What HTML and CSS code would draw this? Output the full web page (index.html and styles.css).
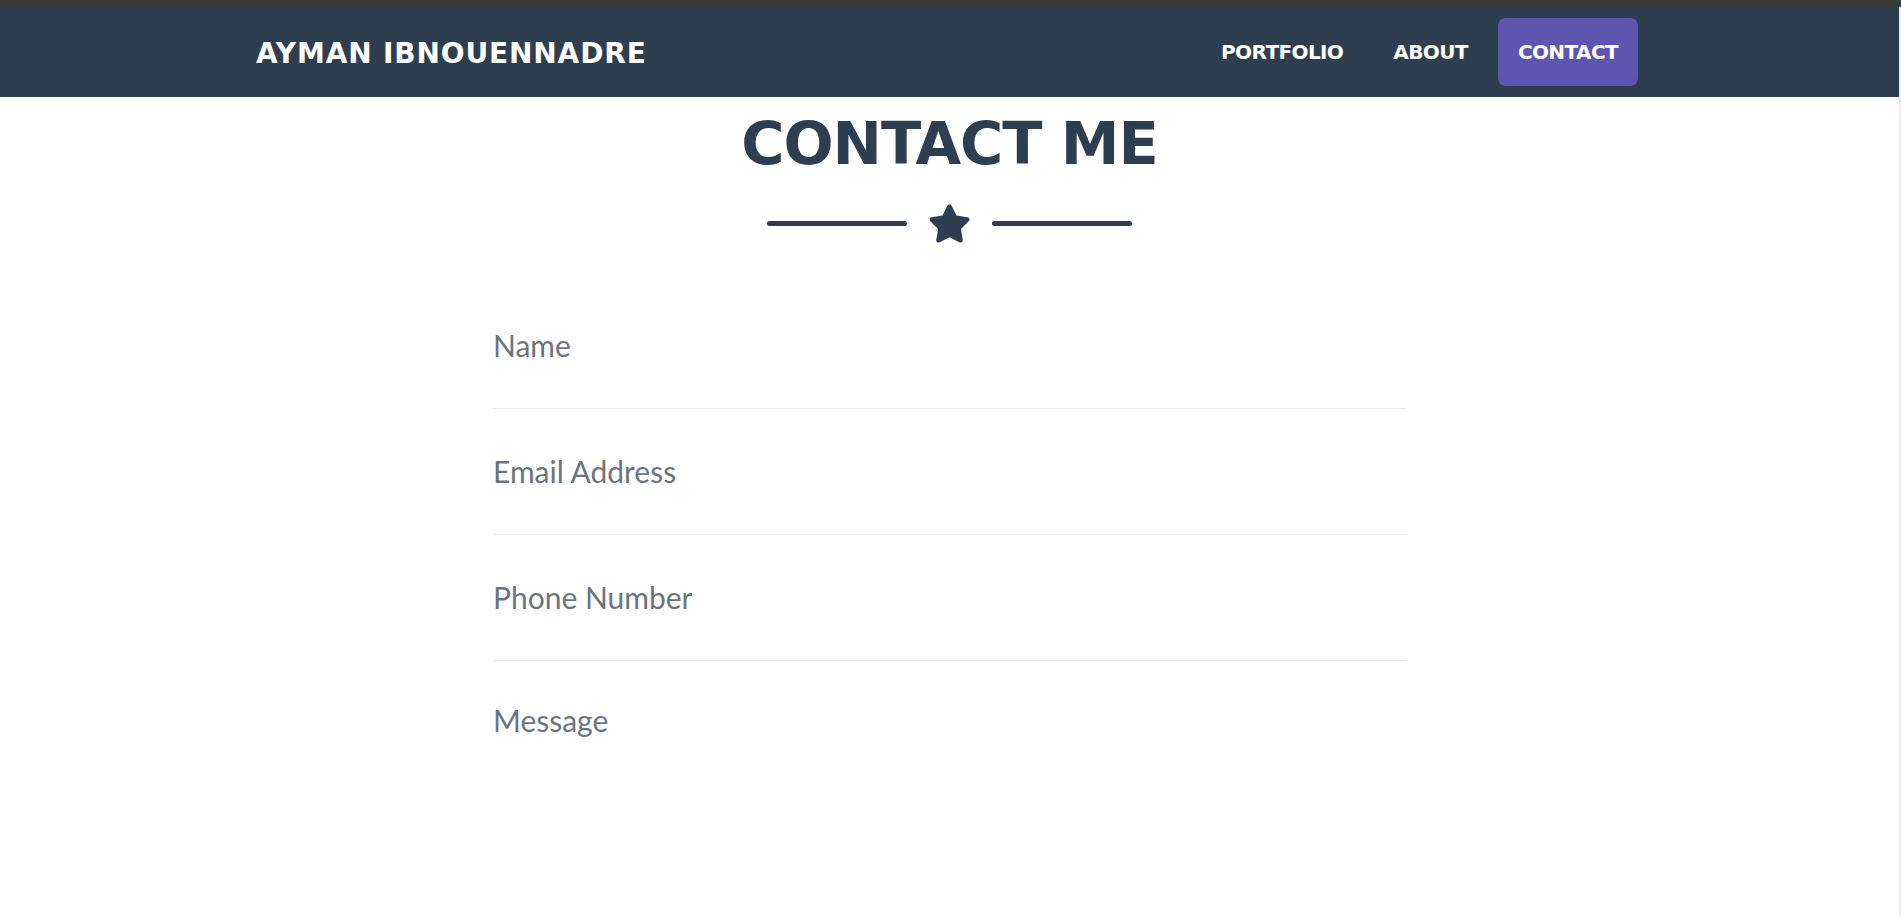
FILE: index.html
```html
<!DOCTYPE html>
<html lang="en">
<head>
<meta charset="utf-8">
<title>Ayman Ibnouennadre - Contact</title>
<link rel="stylesheet" href="styles.css">
</head>
<body>
<div class="topbar"></div>
<div class="window">
  <div class="page">
    <nav class="navbar">
      <div class="nav-inner">
        <a class="brand" href="#">AYMAN IBNOUENNADRE</a>
        <ul class="nav-links">
          <li><a href="#">PORTFOLIO</a></li>
          <li><a href="#">ABOUT</a></li>
          <li><a class="active" href="#">CONTACT</a></li>
        </ul>
      </div>
    </nav>
    <section class="contact">
      <h2 class="section-heading">CONTACT ME</h2>
      <div class="divider">
        <span class="divider-line"></span>
        <svg class="divider-star" viewBox="0 0 576 512" aria-hidden="true"><path d="M259.3 17.8L194 150.2 47.9 171.5c-26.2 3.8-36.7 36.1-17.7 54.6l105.7 103-25 145.5c-4.5 26.3 23.2 46 46.4 33.7L288 439.6l130.7 68.7c23.2 12.2 50.9-7.4 46.4-33.7l-25-145.5 105.7-103c19-18.5 8.5-50.8-17.7-54.6L382 150.2 316.7 17.8c-11.7-23.6-45.6-23.9-57.4 0z"/></svg>
        <span class="divider-line"></span>
      </div>
      <form class="contact-form">
        <label class="field"><span>Name</span></label>
        <label class="field"><span>Email Address</span></label>
        <label class="field"><span>Phone Number</span></label>
        <label class="field field-message"><span>Message</span></label>
      </form>
    </section>
  </div>
  <div class="scrollbar"></div>
</div>
</body>
</html>
```
FILE: styles.css
```css
html, body {
  margin: 0;
  padding: 0;
}
body {
  background: #ffffff;
  overflow: hidden;
  font-family: "Lato", "Liberation Sans", sans-serif;
}
.topbar {
  height: 7px;
  background: #3b3b3b;
}
.window {
  display: flex;
  height: 909px;
}
.page {
  flex: 1;
  min-width: 0;
}
.scrollbar {
  width: 2px;
  background: #ececec;
}
.navbar {
  background: #2c3e50;
  height: 90px;
}
.nav-inner {
  box-sizing: border-box;
  max-width: 1425px;
  height: 100%;
  margin: 0 auto;
  padding: 0 19px;
  display: flex;
  align-items: center;
  justify-content: space-between;
}
.brand {
  color: #ffffff;
  text-decoration: none;
  font-family: "DejaVu Sans", sans-serif;
  font-weight: 700;
  font-size: 28px;
  letter-spacing: 0.85px;
  padding-top: 2px;
}
.nav-links {
  display: flex;
  list-style: none;
  margin: 0;
  padding: 0;
}
.nav-links li {
  margin: 0 5px;
}
.nav-links a {
  display: block;
  padding: 0 20px;
  line-height: 68px;
  border-radius: 8px;
  color: #ffffff;
  text-decoration: none;
  font-family: "DejaVu Sans", sans-serif;
  font-weight: 700;
  font-size: 20px;
  letter-spacing: -0.6px;
}
.nav-links a.active {
  background: #5e55b1;
}
.contact {
  padding-top: 11px;
}
.section-heading {
  margin: 0;
  text-align: center;
  color: #2c3e50;
  font-family: "DejaVu Sans", sans-serif;
  font-weight: 700;
  font-size: 59px;
  line-height: 72px;
  letter-spacing: -1.1px;
}
.divider {
  display: flex;
  justify-content: center;
  align-items: center;
  gap: 21px;
  height: 40px;
  margin-top: 23px;
}
.divider-line {
  width: 140px;
  height: 5px;
  border-radius: 3px;
  background: #2c3e50;
}
.divider-star {
  width: 43px;
  height: 39px;
  fill: #2c3e50;
}
.contact-form {
  width: 913px;
  margin: 40px auto 0;
}
.field {
  display: block;
  padding: 40px 0 41px;
  border-bottom: 1px solid #e9ecef;
  color: #6c757d;
  font-family: "Lato", sans-serif;
  font-size: 30px;
  line-height: 44px;
}
.field-message {
  border-bottom: none;
  padding-top: 37px;
}
```
